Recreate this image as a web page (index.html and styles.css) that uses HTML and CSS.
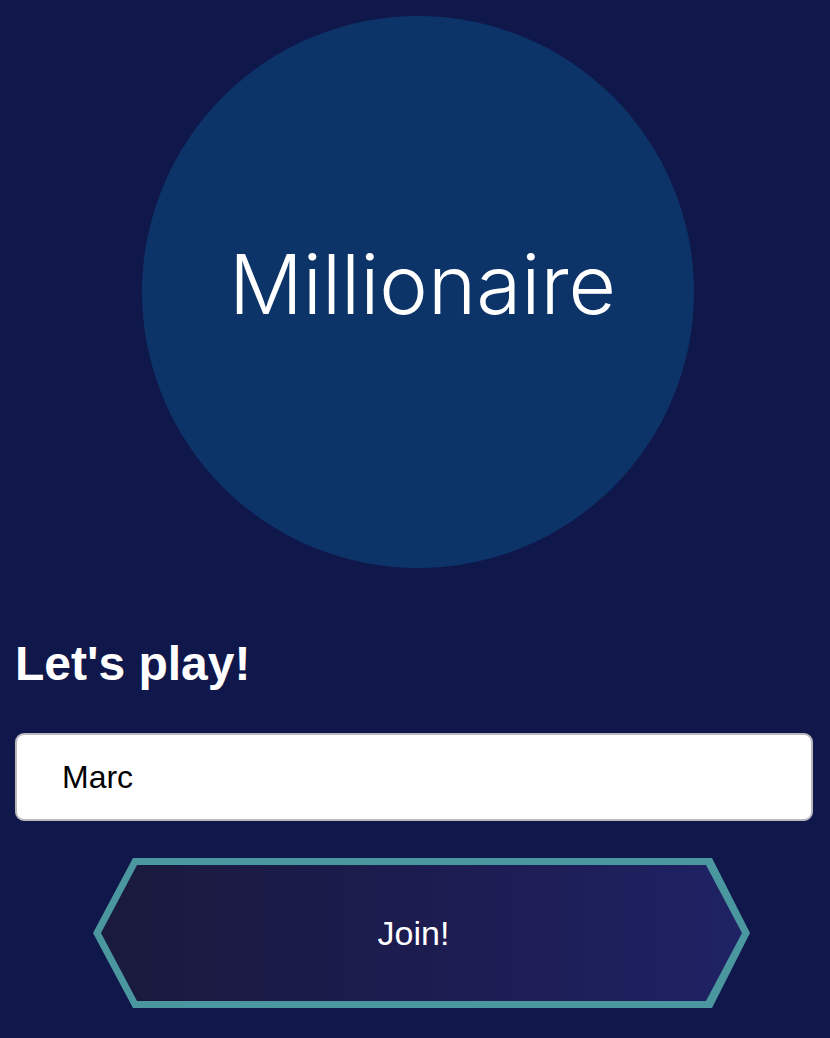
FILE: index.html
```html
<!DOCTYPE html>
<html>
<head>
<meta charset="utf-8">
<link rel="stylesheet" href="styles.css">
</head>
<body>
<main class="page">
  <div class="logo"><span class="logo-text">Millionaire</span></div>
  <h1 class="title">Let's play!</h1>
  <input class="name-input" type="text" value="Marc">
  <button class="join">
    <span class="join-inner"><span class="join-label">Join!</span></span>
  </button>
</main>
</body>
</html>
```

FILE: styles.css
```css
html, body {
  margin: 0;
  padding: 0;
  background: #10174a;
}
.page {
  display: flex;
  flex-direction: column;
  align-items: flex-start;
  padding: 16px 17px 0 15px;
  font-family: "Liberation Sans", Arial, sans-serif;
}
.logo {
  width: 552px;
  height: 552px;
  margin-left: 127px;
  border-radius: 50%;
  background: #0d3469;
  display: flex;
  align-items: center;
  justify-content: center;
  padding-bottom: 16px;
  box-sizing: border-box;
}
.logo-text {
  font-family: Inter, sans-serif;
  font-weight: 320;
  font-size: 82px;
  color: #ffffff;
  margin-left: 9px;
  letter-spacing: 0;
}
.title {
  margin: 68px 0 0 0;
  font-size: 48px;
  line-height: 56px;
  font-weight: 700;
  color: #ffffff;
}
.name-input {
  margin-top: 41px;
  width: 798px;
  height: 88px;
  box-sizing: border-box;
  border: 2px solid #b9b9bd;
  border-radius: 9px;
  background: #ffffff;
  padding: 0 0 0 45px;
  font-family: "Liberation Sans", Arial, sans-serif;
  font-size: 32px;
  color: #000000;
  outline: none;
}
.join {
  margin: 37px 0 0 78px;
  width: 657px;
  height: 150px;
  padding: 7px;
  border: none;
  background: #4a979f;
  clip-path: polygon(0 75px, 40px 0, 619px 0, 657px 75px, 619px 150px, 40px 150px);
  box-sizing: border-box;
  cursor: pointer;
  display: block;
}
.join-inner {
  display: flex;
  align-items: center;
  justify-content: center;
  width: 100%;
  height: 100%;
  padding-right: 16px;
  box-sizing: border-box;
  background: linear-gradient(90deg, #1a1a3d 0%, #1c1c50 50%, #1f2264 100%);
  clip-path: polygon(1px 68px, 37px 0, 606px 0, 642px 68px, 606px 136px, 37px 136px);
}
.join-label {
  font-family: "Liberation Sans", Arial, sans-serif;
  font-size: 34px;
  color: #ffffff;
}
```
